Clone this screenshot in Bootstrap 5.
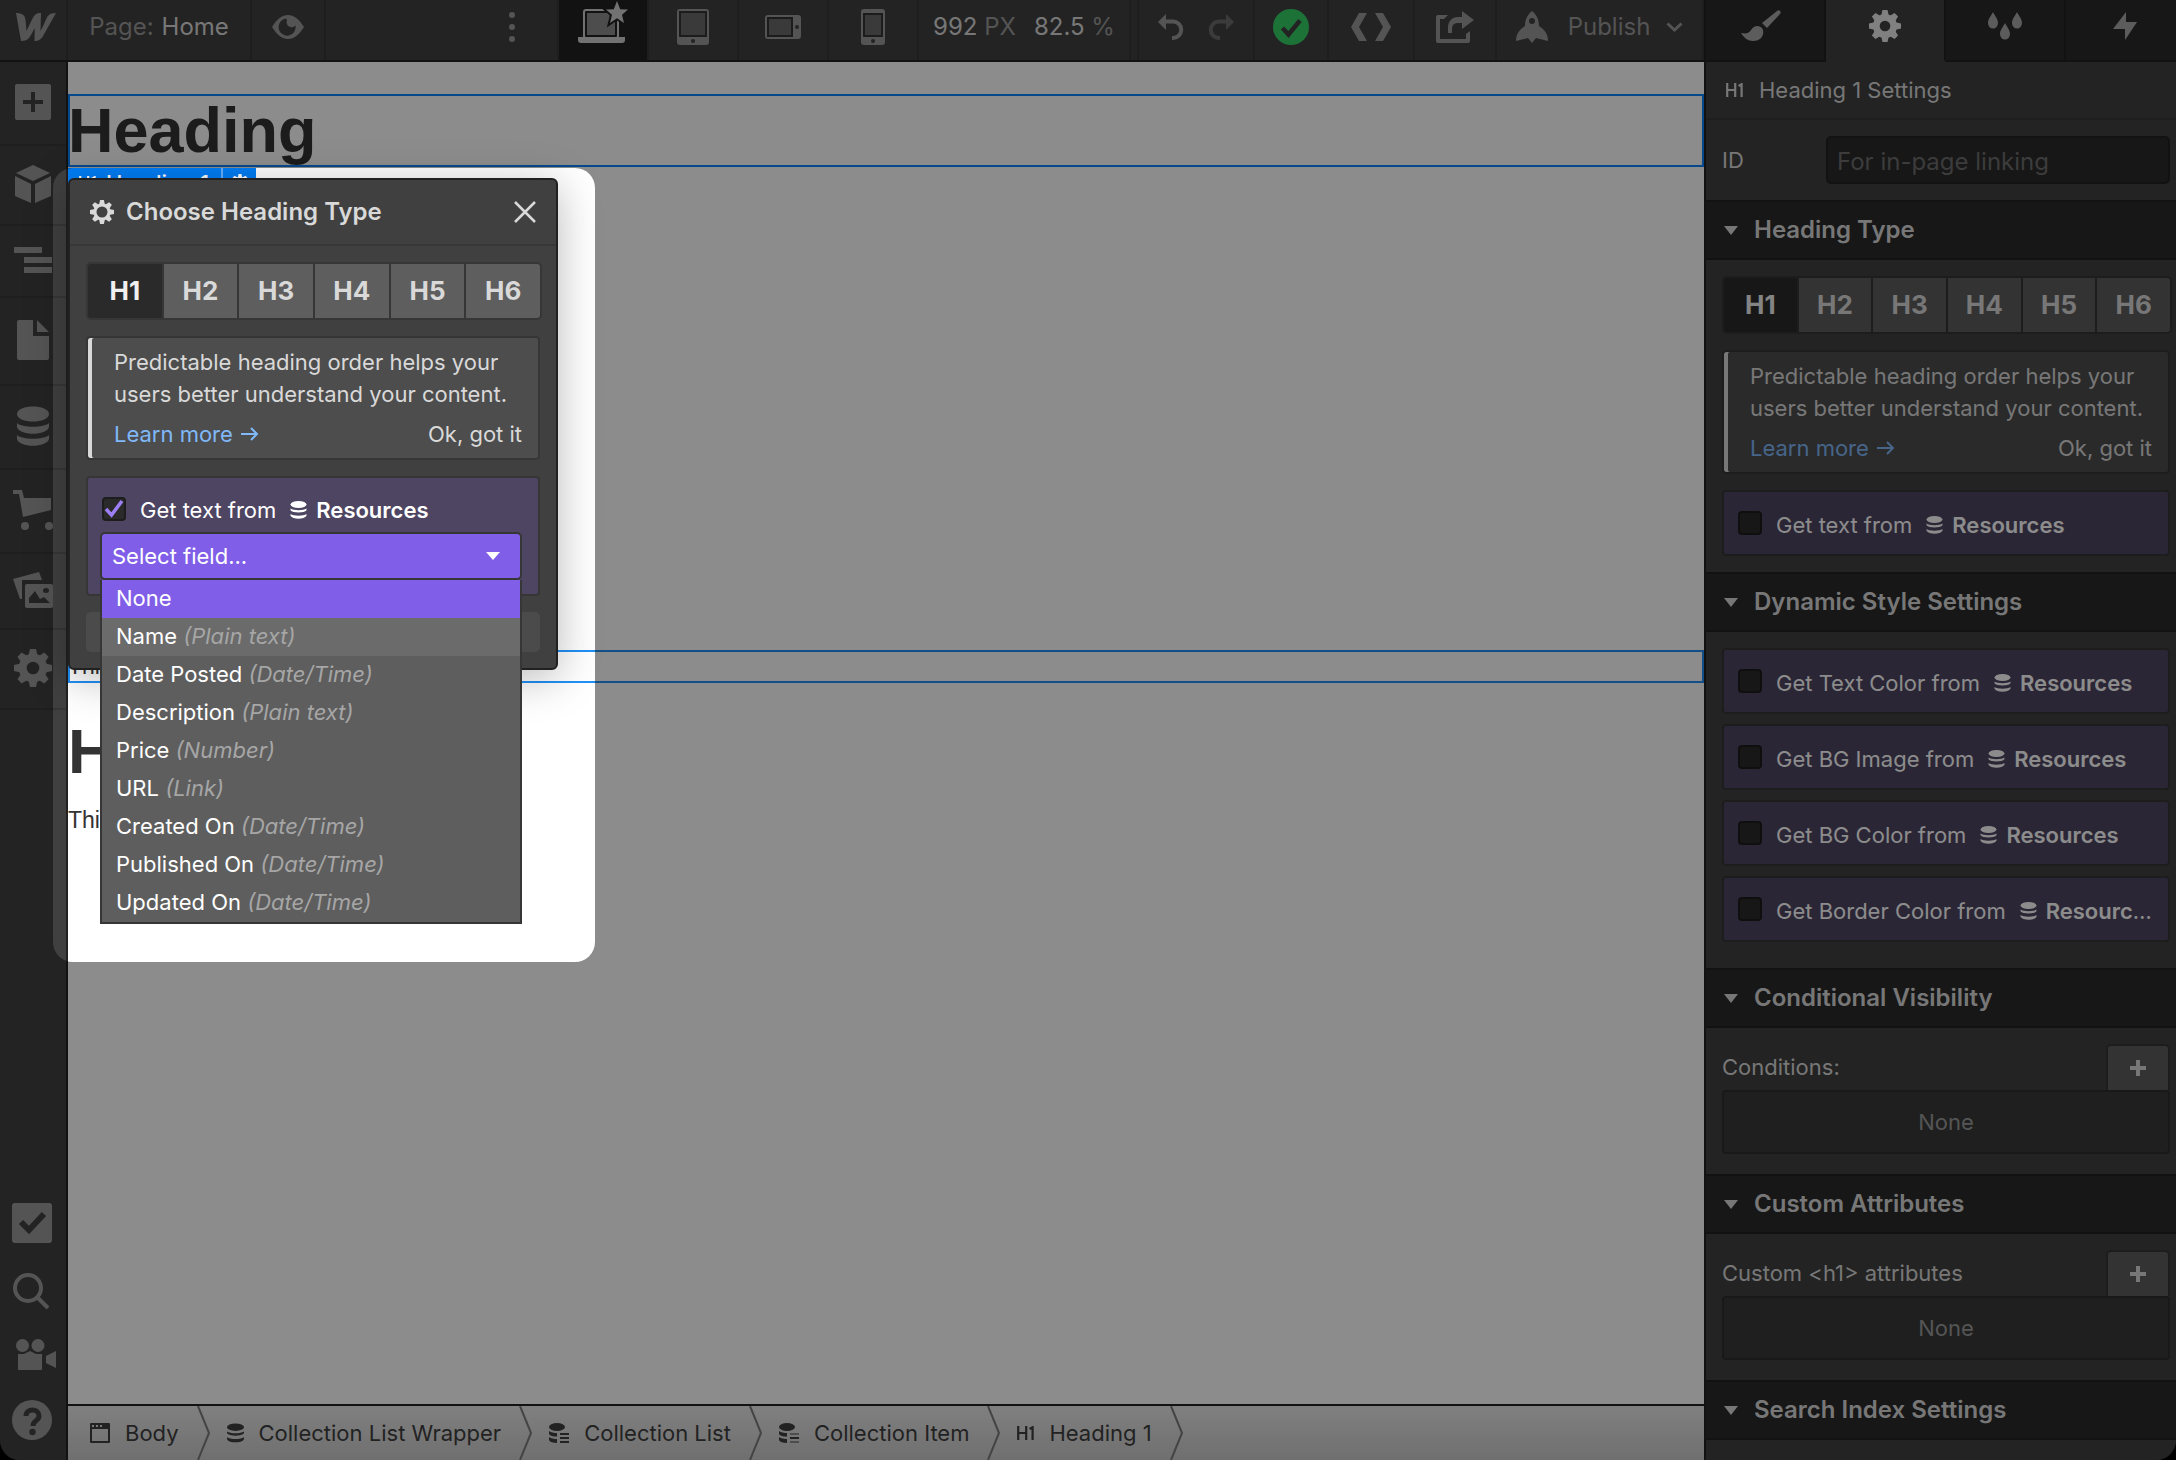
<!DOCTYPE html>
<html lang="en">
<head>
<meta charset="utf-8">
<meta name="viewport" content="width=device-width, initial-scale=1">
<title>Designer – Home</title>
<link href="https://cdn.jsdelivr.net/npm/bootstrap@5.3.0/dist/css/bootstrap.min.css" rel="stylesheet">
<style>
:root{--ui:#404040;--deep:#2a2a2a;--edge:#212121;--line:#373737;--btn:#5e5e5e;--txt:#d9d9d9;--dim:#999;--violet:#805ee8}
body{background:#000;font-family:Inter,"Liberation Sans",sans-serif;font-size:22px;line-height:32px;color:var(--txt)}
.app{height:100vh;border-radius:0 0 20px 20px}
.app button{font:inherit;color:inherit;background:none;border:0;padding:0}
.fit{min-width:0;min-height:0}
svg{display:block;flex:none;fill:currentColor}
/* top bar */
.topbar{height:62px;background:var(--ui);border-bottom:2px solid var(--edge);font-size:24px;color:var(--dim)}
.seg{display:flex;align-items:center;justify-content:center;padding-bottom:7px!important;border-right:2px solid var(--line)!important;flex:none}
.seg.on{background:var(--edge)!important;color:#cfcfcf!important}
.seg.dots{padding-right:42px}
.seg.w-rail{padding-left:6px!important}
.lap{margin-bottom:10px}
.val{color:var(--txt)}
.w-rail{width:68px}.w-page{width:184px}.w-eye{width:74px}.w-dev{width:90px}.w-size{width:212px;gap:18px}.w-gap{width:8px}
.w-undo{width:116px}.w-ok{width:74px}.w-code{width:86px}.w-share{width:82px}.w-pub{width:207px}
/* left rail */
.rail{width:68px;background:var(--ui);border-right:2px solid var(--edge);color:#9a9a9a}
.rail .tool{display:flex;align-items:center;justify-content:center;height:80px;padding-bottom:2px;border-bottom:2px solid var(--line)}
.rail .tool.short{height:72px}.rail .tool.tall{height:84px}.rail .tool.taller{height:88px}.rail .tool.mid{height:76px}
.rail .foot{display:flex;flex-direction:column;align-items:center;gap:29px;padding-bottom:20px;padding-right:2px}
/* canvas */
.stage{background:#fff;color:#333;font-family:"Liberation Sans",Arial,sans-serif;font-size:23px;line-height:33px;padding-top:32px}
.stage h1{font-size:63px;line-height:73px;font-weight:700;margin:0 0 16px;color:#333}
.stage .picked{outline:2px solid #0a85ff;outline-offset:-2px}
.stage .peer{outline:2px solid #2191f7;outline-offset:-2px}
.stage .blank{height:467px}
.stage p{margin:0 0 32px}
.eltag{left:0;top:106px;height:30px;background:#007df5;color:#fff;font:500 22px/30px Inter,sans-serif}
.eltag span{gap:10px;padding:0 12px 0 11px}
.eltag .cog{width:35px;height:30px;border-left:2px solid #66b1ff}
/* dialog */
.dlg{left:0;top:116px;width:490px;background:var(--ui);border:2px solid var(--edge);border-radius:6px;box-shadow:0 8px 44px rgba(0,0,0,.28);font:22px/32px Inter,"Liberation Sans",sans-serif;color:var(--txt)}
.dlg .top{height:66px;border-bottom:2px solid var(--line);padding:0 20px;font-size:24px;font-weight:600;gap:12px}
.dlg .inner{padding:16px}
.hsel{display:flex;height:58px;margin-right:-2px;background:#363636;border:2px solid #363636;border-radius:5px;gap:2px;overflow:hidden}
.hsel button{flex:1;background:var(--btn);font-size:26px;font-weight:700;line-height:54px}
.hsel button.on{background:var(--deep);color:#f0f0f0}
.tip{height:124px;margin-top:16px;background:#4d4d4d;border:2px solid #363636;border-radius:4px;padding:8px 16px 0 26px;box-shadow:inset 4px 0 0 var(--txt)}
.tip a{color:#80b8f8;text-decoration:none}
.bind{background:#4d4562;border:2px solid #363636;border-radius:4px;padding:14px;color:#fff;margin-top:16px}
.bind + .bind{margin-top:10px}
.bind .ln{display:flex;align-items:center;height:34px;white-space:nowrap}
.bind label{display:block;min-width:0;margin-left:14px;padding-top:4px;overflow:hidden;text-overflow:ellipsis}
.bind b{font-weight:600}
.bind label svg{display:inline-block;vertical-align:-1px;margin:0 9px 0 14px}
.tick{appearance:none;flex:none;width:24px;height:24px;margin:0;border:2px solid #1d1d1d;border-radius:4px;background:#2a2a2a}
.tick:checked{background:#2a2a2a url("data:image/svg+xml,%3Csvg xmlns='http://www.w3.org/2000/svg' viewBox='0 0 20 20'%3E%3Cpath d='M2 10l5.500 6L18 2' fill='none' stroke='%239d7ff5' stroke-width='3.500'/%3E%3C/svg%3E") center/20px no-repeat}
.dlg .bind{height:120px;position:relative;padding:16px 12px}
.dlg .bind .ln{height:30px;padding-left:2px}
.dlg .bind label{padding-top:2px}
.pick{display:block;width:422px;height:48px;margin-top:8px;padding:0 10px 1px;background:var(--violet) url("data:image/svg+xml,%3Csvg xmlns='http://www.w3.org/2000/svg' viewBox='0 0 14 8'%3E%3Cpath d='M0 0h14L7 8z' fill='white'/%3E%3C/svg%3E") right 20px center/14px 8px no-repeat;border:2px solid #363636;border-radius:5px;color:#fff;appearance:none;font-size:22px}
.opts{left:12px;top:102px;width:422px;background:var(--btn);border:2px solid #363636;border-top:0;margin:0;padding:0;z-index:3}
.opts li{height:38px;line-height:36px;padding-left:14px;list-style:none;color:#fff}
.opts li.sel{background:var(--violet)}.opts li.hov{background:#6b6b6b}
.opts i{color:#a6a6a6}
.ghost{height:40px;margin-top:16px;background:#4b4b4b!important;border-radius:5px;display:block;width:100%}
/* breadcrumb */
.crumbs{height:56px;border-top:2px solid var(--edge);background:linear-gradient(#e9e9e9,#cbcbcb);color:#3f3f3f;padding-left:22px;white-space:nowrap}
.crumbs a{display:flex;align-items:center;gap:15px;color:inherit;text-decoration:none}
.crumbs .chev{margin:0 17px 0 18px}
/* settings panel */
.panel{width:472px;background:var(--ui);border-left:2px solid var(--edge)}
.tabs{height:62px}
.tabs button{flex:none;width:120px;display:flex;align-items:center;justify-content:center;padding-bottom:8px;background:var(--deep);border-right:2px solid var(--edge);border-bottom:2px solid var(--edge);color:#a6a8a6}
.tabs button.on{background:var(--ui);border-bottom-color:var(--ui);color:#e9e9e9}
.who{height:58px;border-bottom:2px solid #383838;padding-left:20px}
.idrow{height:80px;padding:0 6px 0 16px}
.idrow label{width:104px}
.idrow input{min-width:0;flex:1;height:48px;background:var(--deep);border:2px solid var(--edge);border-radius:5px;padding:2px 9px 0;color:var(--txt);font-size:24px}
.idrow input::placeholder{color:#6d6d6d;opacity:1}
.sect{height:60px;background:var(--deep);border-top:2px solid var(--edge);border-bottom:2px solid var(--edge);font-size:24px;font-weight:600;padding-left:18px;gap:16px;margin:0}
.body{padding:16px 6px 16px 16px}
.body.binds{padding-top:0;padding-bottom:26px}
.body.listed{padding-bottom:20px}
.addbtn{width:64px;height:46px;background:var(--btn)!important;border:2px solid #363636!important;border-bottom:0!important;border-radius:5px 5px 0 0;display:flex;align-items:center;justify-content:center}
.void{height:64px;background:#373938;border:2px solid #2e2e2e;border-radius:4px;color:#9c9c9c;display:flex;align-items:center;justify-content:center}
/* tour highlight: dims everything outside the box */
.spot{left:53px;top:168px;width:542px;height:794px;border-radius:20px;box-shadow:0 0 0 3000px rgba(0,0,0,.45);pointer-events:none;z-index:20}
</style>
<script src="https://cdn.jsdelivr.net/npm/bootstrap@5.3.0/dist/js/bootstrap.bundle.min.js"></script>
</head>
<body>
<svg width="0" height="0" class="position-absolute">
  <defs>
    <path id="tooth" d="M-3 -7L-1.900 -12H1.900L3 -7z"/>
    <g id="teeth"><use href="#tooth"/><use href="#tooth" transform="rotate(45)"/><use href="#tooth" transform="rotate(90)"/><use href="#tooth" transform="rotate(135)"/><use href="#tooth" transform="rotate(180)"/><use href="#tooth" transform="rotate(225)"/><use href="#tooth" transform="rotate(270)"/><use href="#tooth" transform="rotate(315)"/></g>
    <symbol id="gear" viewBox="-12 -12 24 24"><circle r="6.500" fill="none" stroke="currentColor" stroke-width="5"/><use href="#teeth"/></symbol>
    <symbol id="gear-thin" viewBox="-12 -12 24 24"><circle r="7" fill="none" stroke="currentColor" stroke-width="3"/><use href="#teeth"/></symbol>
    <symbol id="db" viewBox="0 0 16 18"><ellipse cx="8" cy="3.500" rx="8" ry="3.500"/><path d="M0 7.500c3 2.200 13 2.200 16 0v1.800c-2 3-14 3-16 0zM0 13c3 2.200 13 2.200 16 0v1.800c-2 4-14 4-16 0z"/></symbol>
    <symbol id="dblist" viewBox="0 0 20 20"><ellipse cx="8" cy="4" rx="8" ry="4"/><path d="M0 8c2 1.500 5 2 8 2v3.500C4 13.500 1 13 0 11zM0 14c2 1.500 5 2 8 2v4c-4 0-7-.8-8-3zM11 10h9v2h-9zM11 14h9v2h-9zM11 18h9v2h-9z"/></symbol>
    <symbol id="dbitem" viewBox="0 0 20 20"><ellipse cx="8" cy="4" rx="8" ry="4"/><path d="M0 8c2 1.500 5 2 8 2v3.500C4 13.500 1 13 0 11zM0 14c2 1.500 5 2 8 2v4c-4 0-7-.8-8-3zM11 14h9v2h-9z"/><path opacity=".5" d="M11 10h9v2h-9zM11 18h9v2h-9z"/></symbol>
    <symbol id="caret" viewBox="0 0 14 9"><path d="M0 0h14L7 9z"/></symbol>
    <symbol id="plus" viewBox="0 0 16 16"><path d="M6 0h4v6h6v4h-6v6H6v-6H0V6h6z"/></symbol>
    <symbol id="h1" viewBox="0 0 17 14"><path d="M1.200 0v14M1.200 7h8M9.200 0v14M15.600 14V1.200L12.600 3" fill="none" stroke="currentColor" stroke-width="2.200"/></symbol>
    <symbol id="arrow" viewBox="0 0 18 14"><path d="M0 7h16M10 1l6 6-6 6" fill="none" stroke="currentColor" stroke-width="2"/></symbol>
    <symbol id="chevron" viewBox="0 0 13 54"><path d="M1 0l11 27L1 54" fill="none" stroke="#7c7c7c" stroke-width="2"/></symbol>
    <symbol id="undo" viewBox="0 0 26 26"><path d="M0 8L8 0v5.500h7a10.200 10.200 0 0 1 0 20.500h-1v-4h1a6 6 0 0 0 0-12.500H8V16z"/></symbol>
  </defs>
</svg>

<div class="app d-flex flex-column position-relative overflow-hidden">
  <div class="d-flex flex-fill fit">
    <div class="d-flex flex-column flex-fill fit">
      <header class="topbar d-flex">
        <button class="seg w-rail" aria-label="Menu"><svg width="40" height="28" viewBox="0 0 40 28"><path d="M0 0c6 0 9 2 9.500 7l1 11C13 13 16 6 18 3c2-2.500 4-3 7-3l-.5 18C28 12 30 6 31.500 3.500 33 1 36 0 40 0L27 23c-2 3.500-4 5-8.500 5l.2-13C16 20 14.500 23 13 25c-1.500 2-4 3-8 3z"/></svg></button>
        <button class="seg w-page gap-2"><span>Page:</span><span class="val">Home</span></button>
        <button class="seg w-eye" aria-label="Preview"><svg width="32" height="24" viewBox="0 0 32 24"><path fill-rule="evenodd" d="M0 12C5 4 10 0 16 0s11 4 16 12c-5 8-10 12-16 12S5 20 0 12zM14 3.500a8.600 8.600 0 1 0 9.500 6.500c-1 2-3 2.500-5 2-3.500-1-4.500-4-3.500-7z"/></svg></button>
        <div class="seg dots flex-fill justify-content-end"><button aria-label="More"><svg width="6" height="30" viewBox="0 0 6 30"><circle cx="3" cy="3" r="3"/><circle cx="3" cy="15" r="3"/><circle cx="3" cy="27" r="3"/></svg></button></div>
        <button class="seg on w-dev" aria-label="Desktop"><svg class="lap" width="50" height="42" viewBox="0 0 50 42"><rect x="6" y="9" width="34" height="28" rx="2" fill="none" stroke="currentColor" stroke-width="2"/><rect x="9" y="12" width="28" height="22" fill="#8d8d8d"/><path d="M0 36h47v3q0 3-3 3H3q-3 0-3-3z"/><path stroke="#212121" stroke-width="4" paint-order="stroke" d="M39 0l3.200 8.200 7.800.3-6 5.300 2 8.200-7-4.800-7 4.800 2-8.200-6-5.300 7.800-.3z"/></svg></button>
        <button class="seg w-dev" aria-label="Tablet"><svg width="32" height="36" viewBox="0 0 32 36"><rect width="32" height="36" rx="3"/><rect x="3" y="3" width="26" height="24" fill="#6b6b6b" stroke="#333" stroke-width="2"/><circle cx="16" cy="32" r="2" fill="#404040"/></svg></button>
        <button class="seg w-dev" aria-label="Mobile landscape"><svg width="36" height="24" viewBox="0 0 36 24"><rect width="36" height="24" rx="3"/><rect x="3" y="3" width="24" height="18" fill="#6b6b6b" stroke="#333" stroke-width="2"/><circle cx="32" cy="12" r="2" fill="#404040"/></svg></button>
        <button class="seg w-dev" aria-label="Mobile portrait"><svg width="24" height="36" viewBox="0 0 24 36"><rect width="24" height="36" rx="3"/><rect x="3" y="5" width="18" height="22" fill="#6b6b6b" stroke="#333" stroke-width="2"/><circle cx="12" cy="32" r="2" fill="#404040"/></svg></button>
        <div class="seg w-size"><span><span class="val">992</span> PX</span><span><span class="val">82.5</span> %</span></div>
        <div class="seg w-gap"></div>
        <div class="seg w-undo gap-4"><button class="val" aria-label="Undo"><svg width="26" height="26"><use href="#undo"/></svg></button><button aria-label="Redo"><svg width="26" height="26" viewBox="0 0 26 26" opacity=".5"><use href="#undo" transform="matrix(-1 0 0 1 26 0)"/></svg></button></div>
        <button class="seg w-ok" aria-label="Saved"><svg width="36" height="36" viewBox="0 0 36 36"><circle cx="18" cy="18" r="18" fill="#36d164"/><path d="M9.500 19l6 6.500L27 11.500" fill="none" stroke="#404040" stroke-width="4.500"/></svg></button>
        <button class="seg w-code" aria-label="Code"><svg width="40" height="28" viewBox="0 0 40 28"><path d="M8 0h8L8 14l8 14H8L0 14zM32 0h-8l8 14-8 14h8l8-14z"/></svg></button>
        <button class="seg w-share" aria-label="Export"><svg width="38" height="32" viewBox="0 0 38 32"><path d="M0 6q0-2 2-2h10L8 8H4v20h26v-5l4-3v10q0 2-2 2H2q-2 0-2-2zM26 0l12 9-12 9v-6h-4c-4 0-6 2-6 6v4h-4v-5c0-7 4-11 10-11h4z"/></svg></button>
        <button class="seg w-pub border-0 gap-3"><svg width="32" height="32" viewBox="0 0 32 32"><path fill-rule="evenodd" d="M16 0c5 4 7 9 7 15 6 4 9 8 9 15l-8-2-4-1-4 5-4-5-4 1-8 2c0-7 3-11 9-15 0-6 2-11 7-15zm0 7a3 3 0 1 0 0 6 3 3 0 0 0 0-6z"/></svg><span class="ms-1">Publish</span><svg width="17" height="10" viewBox="0 0 17 10"><path d="M1.500 1.500l7 6.500 7-6.500" fill="none" stroke="currentColor" stroke-width="3"/></svg></button>
      </header>

      <div class="d-flex flex-fill fit">
        <nav class="rail d-flex flex-column flex-shrink-0">
          <button class="tool tall" aria-label="Add"><svg width="36" height="36" viewBox="0 0 36 36"><path fill-rule="evenodd" d="M2 0h32q2 0 2 2v32q0 2-2 2H2q-2 0-2-2V2q0-2 2-2zm14 8v8H8v4h8v8h4v-8h8v-4h-8V8z"/></svg></button>
          <button class="tool" aria-label="Components"><svg width="36" height="38" viewBox="0 0 36 38"><path d="M18 0l17 8-17 8L1 8zM0 11l16 8v19L0 31zM36 11l-16 8v19l16-7z"/></svg></button>
          <button class="tool short" aria-label="Navigator"><svg width="38" height="26" viewBox="0 0 38 26"><path d="M0 0h28v6H0zM10 10h28v6H10zM10 20h28v6H10z"/></svg></button>
          <button class="tool taller" aria-label="Pages"><svg width="32" height="40" viewBox="0 0 32 40"><path d="M2 0h14v16h16v22q0 2-2 2H2q-2 0-2-2V2q0-2 2-2zM20 0l12 12H20z"/></svg></button>
          <button class="tool tall" aria-label="CMS"><svg width="32" height="40" viewBox="0 0 32 40"><path d="M0 8C0-2 32-2 32 8s-32 10-32 0zM0 17c5 5 27 5 32 0v4c-2 9-30 9-32 0zM0 29c5 5 27 5 32 0v4c-2 9-30 9-32 0z"/></svg></button>
          <button class="tool tall" aria-label="Ecommerce"><svg width="40" height="40" viewBox="0 0 40 40"><path d="M0 0h9l2 8h27v12L10 27 6 4H0z"/><circle cx="12" cy="36" r="4"/><circle cx="36" cy="36" r="4"/></svg></button>
          <button class="tool mid" aria-label="Assets"><svg width="40" height="36" viewBox="0 0 40 36"><path d="M0 7L26 0l3 8H9v19H7z"/><path fill-rule="evenodd" d="M14 12h24q2 0 2 2v20q0 2-2 2H14q-2 0-2-2V14q0-2 2-2zm2 19h21l-6-6-4 2-5-8-6 7zm17-15a3 2.500 0 1 0 0 5 3 2.500 0 0 0 0-5z"/></svg></button>
          <button class="tool" aria-label="Settings"><svg width="38" height="38"><use href="#gear"/></svg></button>
          <div class="foot mt-auto">
            <button aria-label="Audit"><svg width="40" height="40" viewBox="0 0 40 40"><rect width="40" height="40" rx="3"/><path d="M9 19l8 8L32 11" fill="none" stroke="#404040" stroke-width="6"/></svg></button>
            <button aria-label="Search"><svg width="38" height="38" viewBox="0 0 38 38"><path d="M15 3a13 13 0 1 0 0 26 13 13 0 0 0 0-26zM24 25l11 11" fill="none" stroke="currentColor" stroke-width="4"/></svg></button>
            <button class="ps-2" aria-label="Videos"><svg width="40" height="32" viewBox="0 0 40 32"><circle cx="6.500" cy="6.500" r="6.500"/><circle cx="22" cy="6.500" r="6.500"/><path d="M2 15h6l6-3 6 3h6v15q0 1-1 1H3q-1 0-1-1zM40 12v17l-10-5v-7z"/></svg></button>
            <button aria-label="Help"><svg width="40" height="40" viewBox="0 0 40 40"><circle cx="20" cy="20" r="20"/><path d="M14 16c0-8 13-8 13 0 0 5-6 4-6 10" fill="none" stroke="#404040" stroke-width="5"/><circle cx="20.500" cy="32" r="3.200" fill="#404040"/></svg></button>
          </div>
        </nav>

        <div class="d-flex flex-column flex-fill fit">
          <main class="stage flex-fill position-relative">
            <h1 class="picked">Heading</h1>
            <div class="blank"></div>
            <p class="peer">This is some text inside of a div block.</p>
            <h1>Heading</h1>
            <p>This is some text inside of a div block.</p>

            <div class="eltag position-absolute d-flex align-items-center"><span class="d-flex align-items-center"><svg width="17" height="14"><use href="#h1"/></svg>Heading 1</span><button class="cog d-flex align-items-center justify-content-center" aria-label="Element settings"><svg width="18" height="18" color="#fff"><use href="#gear-thin"/></svg></button></div>

            <section class="dlg position-absolute" role="dialog" aria-labelledby="dlg-title">
              <div class="top d-flex align-items-center"><svg width="24" height="24"><use href="#gear-thin"/></svg><span id="dlg-title" class="flex-fill">Choose Heading Type</span><button aria-label="Close"><svg width="22" height="22" viewBox="0 0 22 22"><path d="M1 1l20 20M21 1L1 21" stroke="currentColor" stroke-width="2.500"/></svg></button></div>
              <div class="inner">
                <div class="hsel"><button class="on">H1</button><button>H2</button><button>H3</button><button>H4</button><button>H5</button><button>H6</button></div>
                <div class="tip">
                  <div>Predictable heading order helps your<br>users better understand your content.</div>
                  <div class="d-flex justify-content-between mt-2"><a href="#" class="d-flex align-items-center gap-2">Learn more <svg width="18" height="14"><use href="#arrow"/></svg></a><button>Ok, got it</button></div>
                </div>
                <div class="bind">
                  <div class="ln"><input class="tick" type="checkbox" id="b0" checked><label for="b0">Get text from<svg width="17" height="18"><use href="#db"/></svg><b>Resources</b></label></div>
                  <select class="pick" aria-label="Field"><option>Select field...</option></select>
                  <ul class="opts position-absolute" role="listbox">
                    <li class="sel">None</li>
                    <li class="hov">Name <i>(Plain text)</i></li>
                    <li>Date Posted <i>(Date/Time)</i></li>
                    <li>Description <i>(Plain text)</i></li>
                    <li>Price <i>(Number)</i></li>
                    <li>URL <i>(Link)</i></li>
                    <li>Created On <i>(Date/Time)</i></li>
                    <li>Published On <i>(Date/Time)</i></li>
                    <li>Updated On <i>(Date/Time)</i></li>
                  </ul>
                </div>
                <button class="ghost" aria-label="Show all settings"></button>
              </div>
            </section>
          </main>
          <nav class="crumbs d-flex align-items-center flex-shrink-0">
            <a href="#"><svg width="20" height="20" viewBox="0 0 20 20"><path fill-rule="evenodd" d="M1 0h18q1 0 1 1v18q0 1-1 1H1q-1 0-1-1V1q0-1 1-1zm1 6v12h16V6zM2 2v2h2V2zm4 0v2h2V2zm4 0v2h2V2z"/></svg>Body</a><svg class="chev" width="13" height="54"><use href="#chevron"/></svg>
            <a href="#"><svg width="17" height="20"><use href="#db"/></svg>Collection List Wrapper</a><svg class="chev" width="13" height="54"><use href="#chevron"/></svg>
            <a href="#"><svg width="20" height="20"><use href="#dblist"/></svg>Collection List</a><svg class="chev" width="13" height="54"><use href="#chevron"/></svg>
            <a href="#"><svg width="20" height="20"><use href="#dbitem"/></svg>Collection Item</a><svg class="chev" width="13" height="54"><use href="#chevron"/></svg>
            <a href="#"><svg width="17" height="14"><use href="#h1"/></svg>Heading 1</a><svg class="chev" width="13" height="54"><use href="#chevron"/></svg>
          </nav>
        </div>
      </div>
    </div>

    <aside class="panel flex-shrink-0 overflow-hidden">
      <div class="tabs d-flex">
        <button class="pe-2" aria-label="Style"><svg width="40" height="32" viewBox="0 0 40 32"><path d="M0 23c6 1 8 0 10-3 3-5 8-5 11-2 3 4 1 13-9 13-5 0-9-3-12-8zM36 1c2-2 5 1 3 3L26 18l-5-5z"/></svg></button>
        <button class="on" aria-label="Settings"><svg width="32" height="32"><use href="#gear"/></svg></button>
        <button aria-label="Style manager"><svg width="34" height="28" viewBox="0 0 34 28"><path id="drop" d="M5 0c2 4 5 7 5 11a5 5.500 0 0 1-10 0C0 7 3 4 5 0z"/><use href="#drop" x="12" y="11"/><use href="#drop" x="24"/></svg></button>
        <button aria-label="Interactions"><svg width="24" height="28" viewBox="0 0 24 28"><path d="M13 0v10h11L12 28V17H0z"/></svg></button>
      </div>
      <div class="who d-flex align-items-center"><svg width="17" height="14" class="me-3"><use href="#h1"/></svg>Heading 1 Settings</div>
      <div class="idrow d-flex align-items-center"><label for="eid">ID</label><input id="eid" type="text" placeholder="For in-page linking"></div>

      <h2 class="sect d-flex align-items-center"><svg width="14" height="9"><use href="#caret"/></svg>Heading Type</h2>
      <div class="body">
        <div class="hsel"><button class="on">H1</button><button>H2</button><button>H3</button><button>H4</button><button>H5</button><button>H6</button></div>
        <div class="tip">
          <div>Predictable heading order helps your<br>users better understand your content.</div>
          <div class="d-flex justify-content-between mt-2"><a href="#" class="d-flex align-items-center gap-2">Learn more <svg width="18" height="14"><use href="#arrow"/></svg></a><button>Ok, got it</button></div>
        </div>
        <div class="bind"><div class="ln"><input class="tick" type="checkbox" id="b1"><label for="b1">Get text from<svg width="17" height="18"><use href="#db"/></svg><b>Resources</b></label></div></div>
      </div>

      <h2 class="sect d-flex align-items-center"><svg width="14" height="9"><use href="#caret"/></svg>Dynamic Style Settings</h2>
      <div class="body binds">
        <div class="bind"><div class="ln"><input class="tick" type="checkbox" id="b2"><label for="b2">Get Text Color from<svg width="17" height="18"><use href="#db"/></svg><b>Resources</b></label></div></div>
        <div class="bind"><div class="ln"><input class="tick" type="checkbox" id="b3"><label for="b3">Get BG Image from<svg width="17" height="18"><use href="#db"/></svg><b>Resources</b></label></div></div>
        <div class="bind"><div class="ln"><input class="tick" type="checkbox" id="b4"><label for="b4">Get BG Color from<svg width="17" height="18"><use href="#db"/></svg><b>Resources</b></label></div></div>
        <div class="bind"><div class="ln"><input class="tick" type="checkbox" id="b5"><label for="b5">Get Border Color from<svg width="17" height="18"><use href="#db"/></svg><b>Resources</b></label></div></div>
      </div>

      <h2 class="sect d-flex align-items-center"><svg width="14" height="9"><use href="#caret"/></svg>Conditional Visibility</h2>
      <div class="body listed">
        <div class="d-flex align-items-center justify-content-between"><span>Conditions:</span><button class="addbtn" aria-label="Add condition"><svg width="16" height="16"><use href="#plus"/></svg></button></div>
        <div class="void">None</div>
      </div>

      <h2 class="sect d-flex align-items-center"><svg width="14" height="9"><use href="#caret"/></svg>Custom Attributes</h2>
      <div class="body listed">
        <div class="d-flex align-items-center justify-content-between"><span>Custom &lt;h1&gt; attributes</span><button class="addbtn" aria-label="Add attribute"><svg width="16" height="16"><use href="#plus"/></svg></button></div>
        <div class="void">None</div>
      </div>

      <h2 class="sect d-flex align-items-center"><svg width="14" height="9"><use href="#caret"/></svg>Search Index Settings</h2>
    </aside>
  </div>
  <div class="spot position-absolute"></div>
</div>
</body>
</html>
